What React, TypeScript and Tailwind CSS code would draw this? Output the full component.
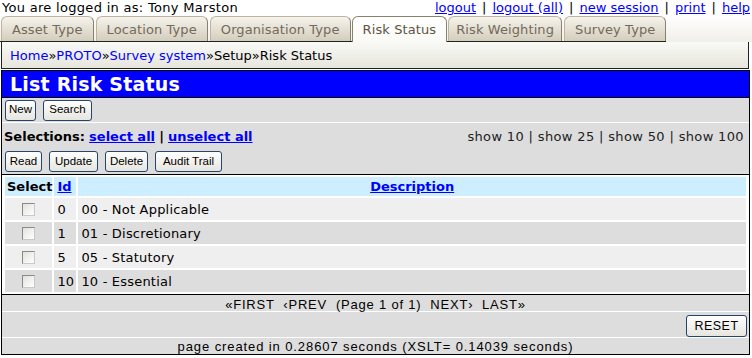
import React from "react";

const tabsLeft = ["Asset Type", "Location Type", "Organisation Type"];
const tabsRight = ["Risk Weighting", "Survey Type"];

const rows = [
  { id: "0", desc: "00 - Not Applicable" },
  { id: "1", desc: "01 - Discretionary" },
  { id: "5", desc: "05 - Statutory" },
  { id: "10", desc: "10 - Essential" },
];

function Tab({ label, tight }: { label: string; tight?: boolean }) {
  return (
    <div
      className={`h-[25px] ${tight ? "px-[7px]" : "px-[10px]"} flex items-center rounded-t-[6px] border border-b-0 border-[#bdb39f] border-r-[#8a806b] bg-gradient-to-b from-[#f5f3ec] to-[#d3cdbc] text-[#736a5a] whitespace-nowrap tracking-[0.1px]`}
    >
      {label}
    </div>
  );
}

function Btn({ label, w }: { label: string; w: string }) {
  return (
    <button
      className={`${w} h-[21px] flex items-center justify-center border border-[#24456e] rounded-[3px] bg-gradient-to-b from-white to-[#e6e5de] text-[11.5px] font-['Liberation_Sans',sans-serif] text-black`}
    >
      {label}
    </button>
  );
}

function Check() {
  return (
    <span className="inline-block w-[13px] h-[13px] border border-[#8a8a8a] border-r-[#c8c8c8] border-b-[#c8c8c8] bg-gradient-to-br from-[#e2e2dc] to-white" />
  );
}

export default function App() {
  return (
    <div className="w-[752px] h-[358px] overflow-hidden bg-white text-black font-['DejaVu_Sans',sans-serif] text-[13px] leading-none">
      {/* top bar */}
      <div className="h-[15px] flex items-center justify-between px-[2px]">
        <span className="tracking-[0.3px]">You are logged in as: Tony Marston</span>
        <span className="flex gap-[6px]">
          <a className="text-[#0000ff] underline">logout</a>|
          <a className="text-[#0000ff] underline">logout (all)</a>|
          <a className="text-[#0000ff] underline">new session</a>|
          <a className="text-[#0000ff] underline">print</a>|
          <a className="text-[#0000ff] underline">help</a>
        </span>
      </div>

      {/* tabs */}
      <div className="h-[27px] flex items-end bg-gradient-to-b from-white to-[#f0efe9]">
        <div className="flex items-end gap-[2px] pl-[1px] pr-[1px] border-b border-[#222]">
          {tabsLeft.map((t) => (
            <Tab key={t} label={t} />
          ))}
        </div>
        <div className="h-[26px] px-[10px] flex items-center rounded-t-[6px] border border-b-0 border-[#8a806c] bg-gradient-to-b from-white to-[#f9f9f6] text-[#5e5443] tracking-[0.1px]">
          Risk Status
        </div>
        <div className="flex items-end gap-[2px] pl-[1px] border-b border-[#222]">
          {tabsRight.map((t) => (
            <Tab key={t} label={t} tight={t === "Risk Weighting"} />
          ))}
        </div>
      </div>

      {/* breadcrumbs */}
      <div className="ml-[1px] w-[748px] h-[27px] flex items-center pl-[8px] border-x border-b border-[#222] bg-gradient-to-b from-[#f9f9f6] to-[#e6e6dd]">
        <a className="text-[#0000ff]">Home</a>»<a className="text-[#0000ff]">PROTO</a>»
        <a className="text-[#0000ff]">Survey system</a>»Setup»Risk Status
      </div>

      {/* main */}
      <div className="mt-[1px] ml-[1px] w-[749px] border border-black">
        <div className="h-[27px] bg-[#0000ff] border-b border-black flex items-center pl-[8px] text-white font-bold text-[19px] tracking-[0.2px]">
          List Risk Status
        </div>

        <div className="h-[25px] bg-[#dddddd] border-b border-white flex items-center gap-[7px] pl-[3px]">
          <Btn label="New" w="w-[31px]" />
          <Btn label="Search" w="w-[49px]" />
        </div>

        <div className="bg-[#dddddd] border-b border-black">
          <div className="h-[26px] flex items-center justify-between pl-[2px] pr-[5px]">
            <span>
              <b>Selections:</b> <a className="text-[#0000ff] underline font-bold">select all</a> <b>|</b>{" "}
              <a className="text-[#0000ff] underline font-bold">unselect all</a>
            </span>
            <span className="text-[13px] text-[#222] tracking-[0.35px]">
              show 10 | show 25 | show 50 | show 100
            </span>
          </div>
          <div className="h-[25px] flex items-center gap-[7px] pl-[3px]">
            <Btn label="Read" w="w-[37px]" />
            <Btn label="Update" w="w-[49px]" />
            <Btn label="Delete" w="w-[43px]" />
            <Btn label="Audit Trail" w="w-[67px]" />
          </div>
        </div>

        <div className="h-[120px] border-b border-black px-[1px]">
          <table className="w-full border-separate border-spacing-[2px]">
            <thead>
              <tr className="h-[19px] bg-[#cceeff]">
                <th className="w-[47px] font-bold text-left pl-[2px]">Select</th>
                <th className="w-[22px] text-left pl-[3px]">
                  <a className="text-[#0000ff] underline font-bold">Id</a>
                </th>
                <th className="text-center">
                  <a className="text-[#0000ff] underline font-bold">Description</a>
                </th>
              </tr>
            </thead>
            <tbody>
              {rows.map((r, idx) => (
                <tr key={r.id} className={`h-[22px] ${idx % 2 === 0 ? "bg-[#efefef]" : "bg-[#dddddd]"}`}>
                  <td className="text-center align-middle pt-[3px]">
                    <Check />
                  </td>
                  <td className="pl-[3px]">{r.id}</td>
                  <td className="pl-[3px] tracking-[0.2px]">{r.desc}</td>
                </tr>
              ))}
            </tbody>
          </table>
        </div>

        <div className="h-[17px] pt-[3px] bg-[#dddddd] border-b border-white flex items-center justify-center font-['Liberation_Sans',sans-serif] text-[13px] tracking-[0.8px] whitespace-pre">
          {"«FIRST  ‹PREV  (Page 1 of 1)  NEXT›  LAST»"}
        </div>
        <div className="h-[26px] pt-[3px] bg-[#dddddd] border-b border-white flex items-center justify-end pr-[2px]">
          <Btn label="RESET" w="w-[61px] h-[22px] text-[12.5px] tracking-[0.5px]" />
        </div>
        <div className="h-[16px] pt-[1px] bg-[#dddddd] flex items-center justify-center font-['Liberation_Sans',sans-serif] text-[13px] tracking-[0.9px]">
          page created in 0.28607 seconds (XSLT= 0.14039 seconds)
        </div>
      </div>
    </div>
  );
}
